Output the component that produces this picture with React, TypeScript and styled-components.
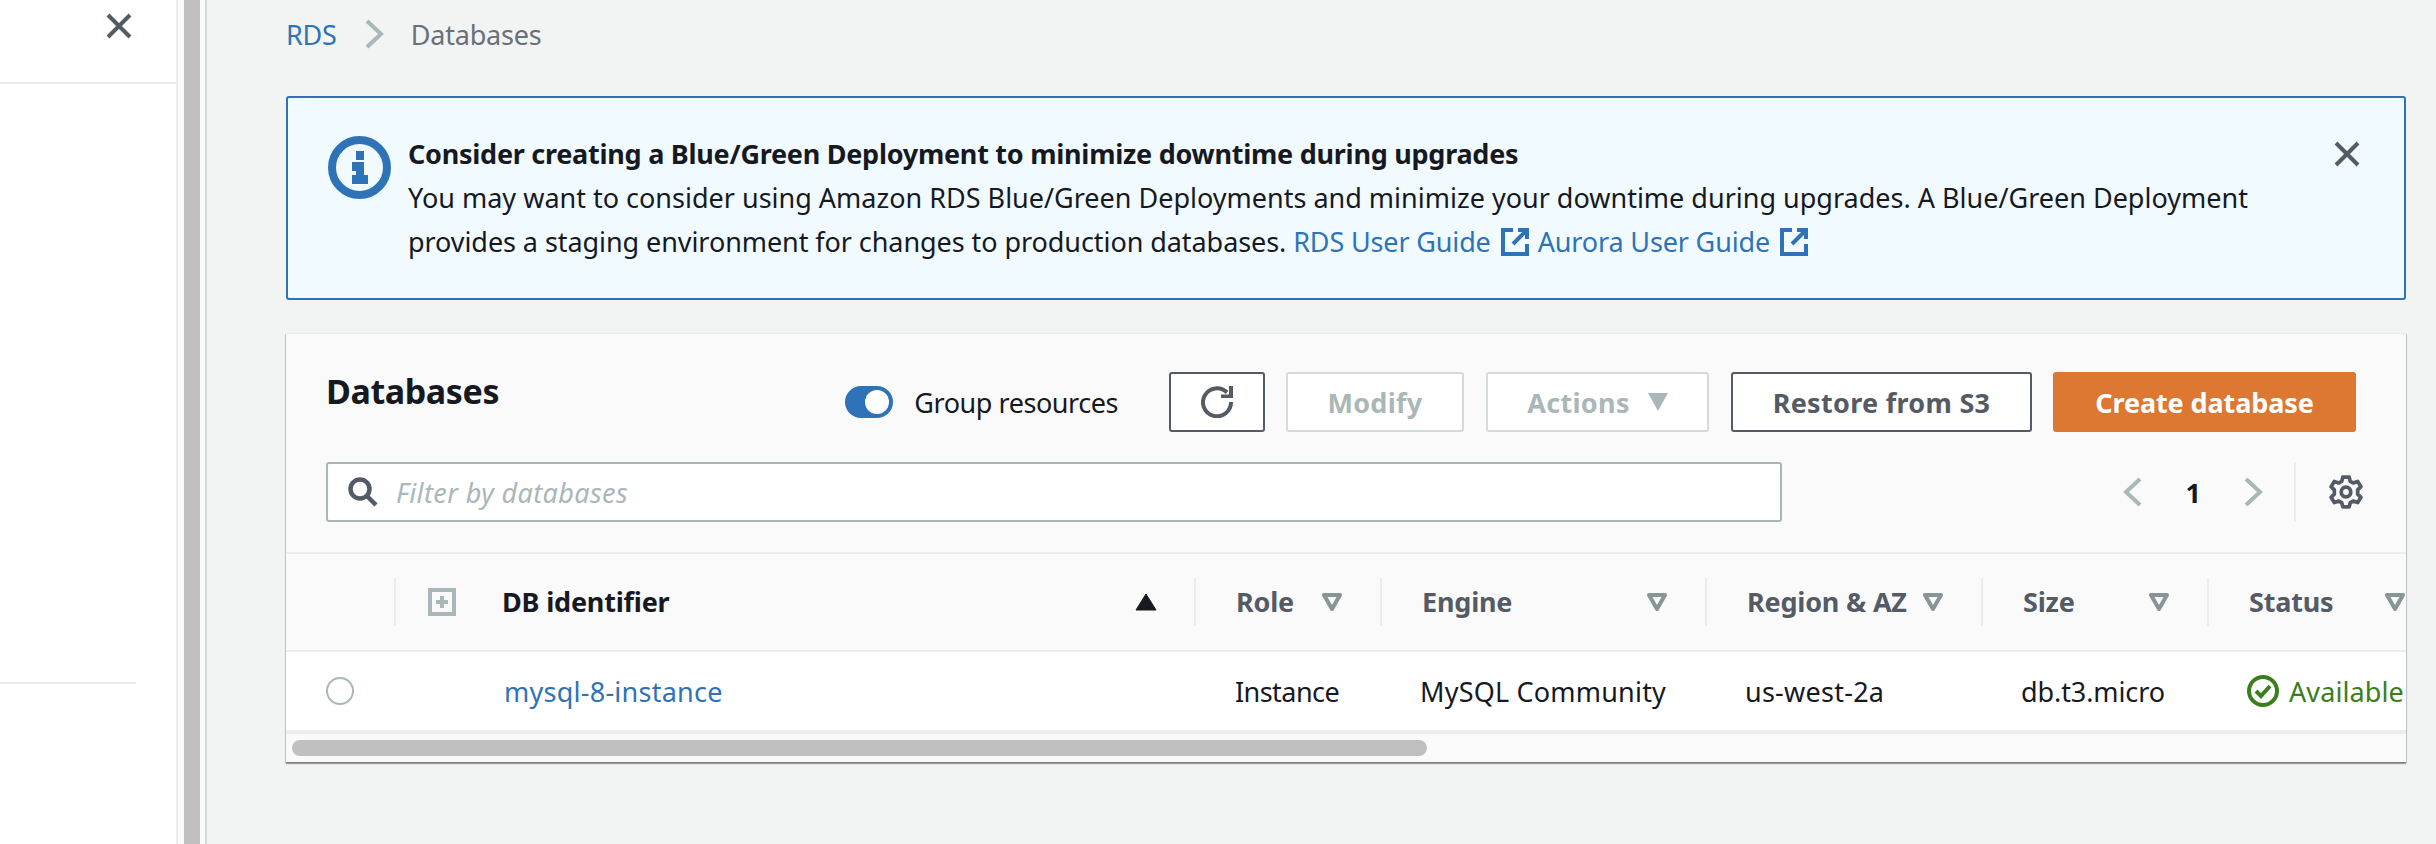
import React from 'react';
import styled, { createGlobalStyle } from 'styled-components';

const Global = createGlobalStyle`
  html, body {
    margin: 0;
    padding: 0;
    width: 2436px;
    height: 844px;
    overflow: hidden;
  }
  * {
    box-sizing: border-box;
  }
  body {
    font-family: 'Noto Sans', 'Open Sans', sans-serif;
    color: #16191f;
  }
`;

const Page = styled.div`
  display: flex;
  width: 2436px;
  height: 844px;
  font-size: 27px;
  letter-spacing: -0.2px;
`;

const Sidebar = styled.aside`
  width: 178px;
  height: 100%;
  background: #fff;
  border-right: 2px solid #eaeded;
  flex: none;
`;

const SidebarHead = styled.div`
  height: 84px;
  border-bottom: 2px solid #eaeded;
  padding: 13px 0 0 105px;
`;

const SidebarClose = styled.svg`
  display: block;
  width: 28px;
  height: 26px;
`;

const SidebarRule = styled.div`
  width: 136px;
  height: 2px;
  margin-top: 598px;
  background: #eaeded;
`;

const Gutter = styled.div`
  width: 29px;
  flex: none;
  background: #fafafa;
  padding-left: 6px;
  border-right: 2px solid #d5dbdb;
`;

const GutterThumb = styled.div`
  width: 16px;
  height: 100%;
  background: #c0c0c0;
`;

const Main = styled.main`
  flex: 1;
  background: #f2f3f3;
  padding: 14px 30px 0 79px;
`;

const Crumbs = styled.nav`
  display: flex;
  align-items: center;
  height: 40px;
  margin-bottom: 42px;
`;

const CrumbLink = styled.a`
  color: #2e73b8;
`;

const CrumbSep = styled.svg`
  width: 20px;
  height: 30px;
  margin: 0 27px;
`;

const CrumbCurrent = styled.span`
  color: #687078;
`;

const Flash = styled.section`
  position: relative;
  height: 204px;
  border: 2px solid #2e73b8;
  border-radius: 3px;
  background: #f1faff;
  display: flex;
  padding: 34px 0 0 40px;
`;

const InfoIcon = styled.svg`
  width: 63px;
  height: 63px;
  flex: none;
  margin: 4px 17px 0 0;
`;

const FlashBody = styled.div`
  line-height: 44px;
`;

const FlashTitle = styled.div`
  font-weight: 700;
  letter-spacing: -0.26px;
`;

const FlashLine = styled.div<{ $tracking: number }>`
  white-space: nowrap;
  letter-spacing: ${(p) => p.$tracking}px;
`;

const FlashLink = styled.a`
  color: #2e73b8;
  letter-spacing: -0.15px;
`;

const ExternalIcon = styled.svg`
  width: 28px;
  height: 28px;
  margin: 0 9px 0 10px;
  vertical-align: -4px;
`;

const FlashClose = styled.svg`
  position: absolute;
  top: 43px;
  right: 43px;
  width: 28px;
  height: 26px;
`;

const Card = styled.section`
  margin-top: 33px;
  height: 429px;
  background: #fafafa;
  border-top: 1px solid #eaeded;
  box-shadow: 0 2px 1px 0 rgba(0, 28, 36, 0.35), 1px 1px 1px 0 rgba(0, 28, 36, 0.15), -1px 1px 1px 0 rgba(0, 28, 36, 0.15);
  overflow: hidden;
`;

const CardHeader = styled.header`
  height: 220px;
  padding: 38px 50px 0 40px;
  border-bottom: 2px solid #eaeded;
`;

const ActionsRow = styled.div`
  display: flex;
  align-items: center;
  height: 60px;
`;

const CardTitle = styled.h2`
  margin: 0 auto 22px 0;
  font-size: 34px;
  font-weight: 700;
  letter-spacing: -0.4px;
`;

const Toggle = styled.span`
  position: relative;
  width: 48px;
  height: 32px;
  border-radius: 16px;
  background: #2e73b8;
  flex: none;
  margin-right: 21px;
`;

const ToggleKnob = styled.span`
  position: absolute;
  top: 4px;
  right: 4px;
  width: 24px;
  height: 24px;
  border-radius: 50%;
  background: #fff;
`;

const ToggleLabel = styled.span`
  margin-right: 51px;
  letter-spacing: -0.45px;
`;

const Button = styled.button<{ $variant?: 'normal' | 'disabled' | 'primary' }>`
  display: flex;
  align-items: center;
  justify-content: center;
  height: 60px;
  margin-left: 22px;
  padding: 0;
  border-radius: 3px;
  font-family: inherit;
  font-size: 27px;
  font-weight: 700;
  letter-spacing: 0.3px;
  background: ${(p) => (p.$variant === 'primary' ? '#dd7833' : '#fff')};
  color: ${(p) => (p.$variant === 'primary' ? '#fff' : p.$variant === 'disabled' ? '#aab7b8' : '#545b64')};
  border: 2px solid
    ${(p) => (p.$variant === 'primary' ? '#dd7833' : p.$variant === 'disabled' ? '#d5dbdb' : '#545b64')};
`;

const RefreshButton = styled(Button)`
  width: 96px;
  margin-left: 0;
`;

const ModifyButton = styled(Button)`
  width: 178px;
  margin-left: 21px;
`;

const ActionsButton = styled(Button)`
  width: 223px;
  gap: 18px;
`;

const RestoreButton = styled(Button)`
  width: 301px;
`;

const CreateButton = styled(Button)`
  width: 303px;
  margin-left: 21px;
  letter-spacing: -0.1px;
`;

const FilterRow = styled.div`
  display: flex;
  align-items: center;
  height: 60px;
  margin-top: 30px;
`;

const SearchBox = styled.div`
  display: flex;
  align-items: center;
  width: 1456px;
  height: 60px;
  padding-left: 20px;
  background: #fff;
  border: 2px solid #aab7b8;
  border-radius: 3px;
  gap: 18px;
`;

const SearchText = styled.span`
  color: #aab7b8;
  font-style: italic;
  letter-spacing: 0.38px;
`;

const Pager = styled.div`
  display: flex;
  align-items: center;
  margin-left: auto;
  height: 60px;
  margin-right: -7px;
`;

const PagerChevron = styled.svg`
  width: 20px;
  height: 30px;
`;

const PagerNumber = styled.span`
  width: 100px;
  text-align: center;
  font-weight: 700;
`;

const PagerRule = styled.span`
  width: 2px;
  height: 60px;
  margin: 0 33px 0 31px;
  background: #eaeded;
`;

const TableWrap = styled.div`
  height: 208px;
  overflow: hidden;
`;

const Grid = styled.div`
  display: grid;
  grid-template-columns: 108px 800px 186px 325px 276px 226px 199px;
`;

const HeadCell = styled.div<{ $first?: boolean; $padRight: number }>`
  position: relative;
  height: 98px;
  display: flex;
  align-items: center;
  font-weight: 700;
  color: ${(p) => (p.$first ? '#16191f' : '#545b64')};
  padding: 0 ${(p) => p.$padRight}px 1px ${(p) => (p.$first ? 34 : 42)}px;
  border-bottom: 2px solid #eaeded;
  overflow: hidden;
`;

const ColRule = styled.span`
  position: absolute;
  left: 0;
  top: 24px;
  width: 2px;
  height: 48px;
  background: #eaeded;
`;

const SelectHead = styled.div`
  height: 98px;
  border-bottom: 2px solid #eaeded;
`;

const ExpandIcon = styled.svg`
  width: 28px;
  height: 28px;
  margin-right: 46px;
  flex: none;
`;

const HeadLabel = styled.span`
  display: flex;
  align-items: center;
  margin-right: auto;
  white-space: nowrap;
`;

const SortIcon = styled.svg`
  width: 22px;
  height: 18px;
  flex: none;
`;

const BodyCell = styled.div<{ $tracking?: number }>`
  height: 82px;
  display: flex;
  align-items: center;
  background: #fff;
  padding-left: 40px;
  white-space: nowrap;
  overflow: hidden;
  border-bottom: 4px solid #eaeded;
  letter-spacing: ${(p) => p.$tracking ?? 0}px;
`;

const Radio = styled.span`
  width: 28px;
  height: 28px;
  border: 2px solid #aab7b8;
  border-radius: 50%;
  background: #fff;
`;

const NameCell = styled(BodyCell)`
  padding-left: 110px;
`;

const NameLink = styled.a`
  color: #2e73b8;
`;

const InstanceCell = styled(BodyCell)`
  padding-left: 41px;
`;

const StatusCell = styled(BodyCell)`
  color: #3b7e1e;
  gap: 10px;
`;

const StatusIcon = styled.svg`
  width: 32px;
  height: 32px;
  flex: none;
`;

const Scrollbar = styled.div`
  height: 28px;
  padding: 6px;
`;

const ScrollThumb = styled.div`
  width: 1135px;
  height: 16px;
  border-radius: 8px;
  background: #c0c0c0;
`;

const CloseGlyph = () => (
  <path d="M3 2 L25 24 M25 2 L3 24" stroke="#545b64" strokeWidth="4" fill="none" />
);

const External = () => (
  <ExternalIcon viewBox="0 0 28 28">
    <path d="M12 2H2V26H26V16" fill="none" stroke="#2e73b8" strokeWidth="4" />
    <path d="M17 2H26V11 M26 2L12 16" fill="none" stroke="#2e73b8" strokeWidth="4" />
  </ExternalIcon>
);

const Chevron = ({ dir, color }: { dir: 'left' | 'right'; color: string }) => (
  <PagerChevron viewBox="0 0 20 30">
    <path
      d={dir === 'right' ? 'M3 2 L17 15 L3 28' : 'M17 2 L3 15 L17 28'}
      fill="none"
      stroke={color}
      strokeWidth="4"
    />
  </PagerChevron>
);

const FilterTriangle = () => (
  <SortIcon viewBox="0 0 22 18">
    <path d="M3 2 H19 L11 16 Z" fill="none" stroke="#879596" strokeWidth="4" strokeLinejoin="round" />
  </SortIcon>
);

const columns = [
  { label: 'Role', padRight: 37 },
  { label: 'Engine', padRight: 37 },
  { label: 'Region & AZ', padRight: 37 },
  { label: 'Size', padRight: 37 },
  { label: 'Status', padRight: 0 },
];

export default function App() {
  return (
    <>
      <Global />
      <Page>
        <Sidebar>
          <SidebarHead>
            <SidebarClose viewBox="0 0 28 26">
              <CloseGlyph />
            </SidebarClose>
          </SidebarHead>
          <SidebarRule />
        </Sidebar>
        <Gutter>
          <GutterThumb />
        </Gutter>
        <Main>
          <Crumbs>
            <CrumbLink>RDS</CrumbLink>
            <CrumbSep viewBox="0 0 20 30">
              <path d="M3 2 L17 15 L3 28" fill="none" stroke="#aab7b8" strokeWidth="4" />
            </CrumbSep>
            <CrumbCurrent>Databases</CrumbCurrent>
          </Crumbs>

          <Flash>
            <InfoIcon viewBox="0 0 63 63">
              <circle cx="31.5" cy="31.5" r="27.5" fill="none" stroke="#2e73b8" strokeWidth="8" />
              <path d="M28 15h8v9h-8z M24 26h12v13h4v9H24v-9h4v-4h-4z" fill="#2e73b8" />
            </InfoIcon>
            <FlashBody>
              <FlashTitle>Consider creating a Blue/Green Deployment to minimize downtime during upgrades</FlashTitle>
              <FlashLine $tracking={0}>
                You may want to consider using Amazon RDS Blue/Green Deployments and minimize your downtime during
                upgrades. A Blue/Green Deployment
              </FlashLine>
              <FlashLine $tracking={-0.07}>
                provides a staging environment for changes to production databases.{' '}
                <FlashLink>RDS User Guide</FlashLink>
                <External />
                <FlashLink>Aurora User Guide</FlashLink>
                <External />
              </FlashLine>
            </FlashBody>
            <FlashClose viewBox="0 0 28 26">
              <CloseGlyph />
            </FlashClose>
          </Flash>

          <Card>
            <CardHeader>
              <ActionsRow>
                <CardTitle>Databases</CardTitle>
                <Toggle>
                  <ToggleKnob />
                </Toggle>
                <ToggleLabel>Group resources</ToggleLabel>
                <RefreshButton>
                  <svg width="32" height="32" viewBox="0 0 32 32">
                    <path d="M26 6.500 A14 14 0 1 0 30 16" fill="none" stroke="#545b64" strokeWidth="4" />
                    <path d="M28 0h4v12H20V8.500h8z" fill="#545b64" />
                  </svg>
                </RefreshButton>
                <ModifyButton $variant="disabled">Modify</ModifyButton>
                <ActionsButton $variant="disabled">
                  Actions
                  <svg width="20" height="18" viewBox="0 0 20 18">
                    <path d="M0 0 H20 L10 18 Z" fill="#aab7b8" />
                  </svg>
                </ActionsButton>
                <RestoreButton>Restore from S3</RestoreButton>
                <CreateButton $variant="primary">Create database</CreateButton>
              </ActionsRow>
              <FilterRow>
                <SearchBox>
                  <svg width="30" height="30" viewBox="0 0 30 30">
                    <circle cx="12" cy="12" r="9.500" fill="none" stroke="#545b64" strokeWidth="4.500" />
                    <path d="M19 19 L28 28" stroke="#545b64" strokeWidth="4.500" />
                  </svg>
                  <SearchText>Filter by databases</SearchText>
                </SearchBox>
                <Pager>
                  <Chevron dir="left" color="#aab7b8" />
                  <PagerNumber>1</PagerNumber>
                  <Chevron dir="right" color="#aab7b8" />
                  <PagerRule />
                  <svg width="34" height="34" viewBox="0 0 32 32">
                    <path
                      d="M13 2h6l1 4 3 1.500 4-1.500 3 5-3 3v4l3 3-3 5-4-1.500-3 1.500-1 4h-6l-1-4-3-1.500-4 1.500-3-5 3-3v-4l-3-3 3-5 4 1.500 3-1.500z"
                      fill="none"
                      stroke="#545b64"
                      strokeWidth="3.500"
                      strokeLinejoin="round"
                    />
                    <circle cx="16" cy="16" r="4.500" fill="none" stroke="#545b64" strokeWidth="3.500" />
                  </svg>
                </Pager>
              </FilterRow>
            </CardHeader>
            <TableWrap>
              <Grid>
                <SelectHead />
                <HeadCell $first $padRight={37}>
                  <ColRule />
                  <ExpandIcon viewBox="0 0 28 28">
                    <rect x="2" y="2" width="24" height="24" fill="none" stroke="#aab7b8" strokeWidth="4" />
                    <path d="M14 8v12M8 14h12" stroke="#aab7b8" strokeWidth="4" />
                  </ExpandIcon>
                  <HeadLabel>DB identifier</HeadLabel>
                  <SortIcon viewBox="0 0 22 18">
                    <path d="M11 1 L21 17 H1 Z" fill="#16191f" stroke="#16191f" strokeLinejoin="round" />
                  </SortIcon>
                </HeadCell>
                {columns.map((c) => (
                  <HeadCell key={c.label} $padRight={c.padRight}>
                    <ColRule />
                    <HeadLabel>{c.label}</HeadLabel>
                    <FilterTriangle />
                  </HeadCell>
                ))}

                <BodyCell>
                  <Radio />
                </BodyCell>
                <NameCell $tracking={0.25}>
                  <NameLink>mysql-8-instance</NameLink>
                </NameCell>
                <InstanceCell $tracking={-0.55}>Instance</InstanceCell>
                <BodyCell $tracking={0.2}>MySQL Community</BodyCell>
                <BodyCell $tracking={0.25}>us-west-2a</BodyCell>
                <BodyCell $tracking={-0.1}>db.t3.micro</BodyCell>
                <StatusCell $tracking={0.1}>
                  <StatusIcon viewBox="0 0 32 32">
                    <circle cx="16" cy="16" r="14" fill="none" stroke="#3b7e1e" strokeWidth="4" />
                    <path d="M9 16 L14 21 L23 11" fill="none" stroke="#3b7e1e" strokeWidth="4" />
                  </StatusIcon>
                  Available
                </StatusCell>
              </Grid>
              <Scrollbar>
                <ScrollThumb />
              </Scrollbar>
            </TableWrap>
          </Card>
        </Main>
      </Page>
    </>
  );
}
